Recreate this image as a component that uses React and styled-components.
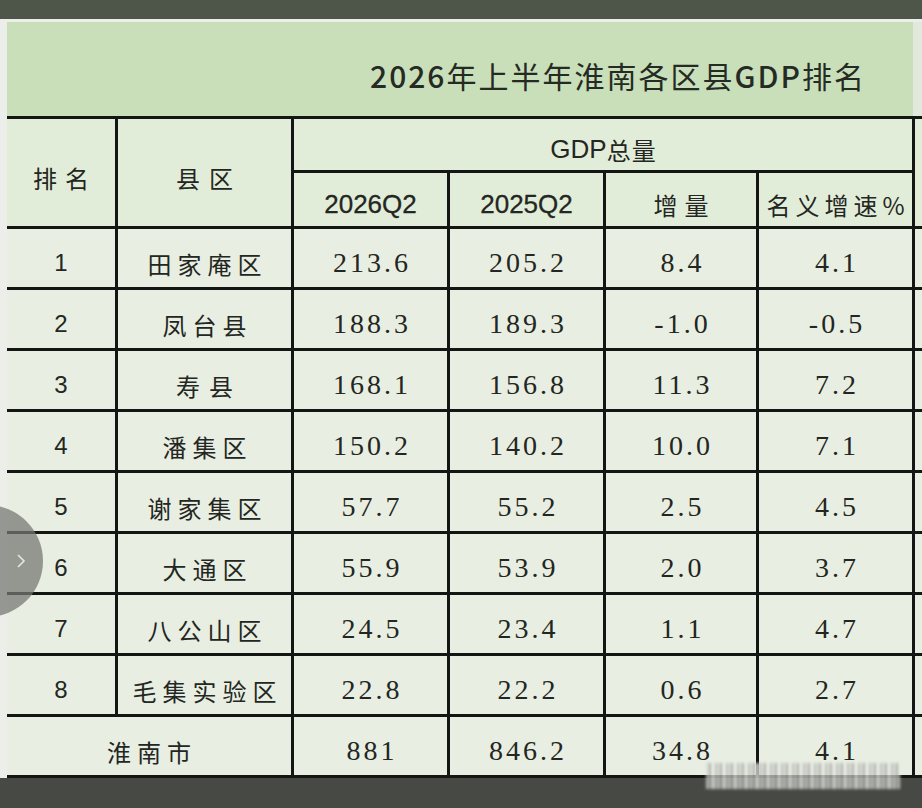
import React from "react";
import styled, { createGlobalStyle } from "styled-components";

const GlobalStyle = createGlobalStyle`
  html, body {
    margin: 0;
    padding: 0;
    background: #474944;
  }
  * {
    box-sizing: border-box;
  }
`;

const cjk = `"Noto Sans CJK SC", "Noto Sans", sans-serif`;

const rows = [
  [1, "田家庵区", "213.6", "205.2", "8.4", "4.1"],
  [2, "凤台县", "188.3", "189.3", "-1.0", "-0.5"],
  [3, "寿县", "168.1", "156.8", "11.3", "7.2"],
  [4, "潘集区", "150.2", "140.2", "10.0", "7.1"],
  [5, "谢家集区", "57.7", "55.2", "2.5", "4.5"],
  [6, "大通区", "55.9", "53.9", "2.0", "3.7"],
  [7, "八公山区", "24.5", "23.4", "1.1", "4.7"],
  [8, "毛集实验区", "22.8", "22.2", "0.6", "2.7"],
];

const total = ["淮南市", "881", "846.2", "34.8", "4.1"];

const Page = styled.div`
  position: relative;
  width: 922px;
  height: 808px;
  display: flex;
  flex-direction: column;
  overflow: hidden;
  background: #474944;
`;

const TopBar = styled.div`
  height: 19px;
  flex-shrink: 0;
  background: #4e5649;
`;

const Screen = styled.div`
  display: flex;
  flex-direction: column;
  padding: 3px 0 0 7px;
  background: #eceee9;
  overflow: hidden;
  flex-shrink: 0;
`;

const Banner = styled.div`
  display: flex;
  height: 94px;
`;

const Title = styled.div`
  width: 906px;
  flex-shrink: 0;
  display: flex;
  align-items: center;
  justify-content: center;
  padding: 12px 0 0 316px;
  background: #c8dfb9;
  color: #262a24;
  font-family: ${cjk};
  font-size: 30px;
  font-weight: 400;
  letter-spacing: 2px;
`;

const TitleLatin = styled.span`
  font-weight: 500;
`;

const BannerRest = styled.div`
  flex: 1;
  background: #e2e9dc;
`;

const Grid = styled.div`
  display: grid;
  width: max-content;
  grid-template-columns: 108px 173px 153px 153px 150px 153px 100px;
  grid-template-rows: 51px 53px repeat(9, 58px);
  gap: 3px;
  padding: 3px 0;
  background: #141614;
`;

const Cell = styled.div`
  grid-column: span ${(p) => p.$cols || 1};
  grid-row: span ${(p) => p.$rows || 1};
  display: flex;
  align-items: center;
  justify-content: center;
  padding-top: 10px;
  padding-left: ${(p) => p.$ls || 0}px;
  background: ${(p) => (p.$head ? "#e2edd9" : "#e8eee1")};
  color: #232622;
  white-space: nowrap;
  font-family: ${cjk};
  font-size: 24px;
  letter-spacing: ${(p) => p.$ls || 0}px;
`;

const Latin = styled.span`
  font-family: "Liberation Sans", Arial, sans-serif;
  font-size: 26px;
  letter-spacing: 0;
`;

const Quarter = styled(Cell)`
  font-family: "Liberation Sans", Arial, sans-serif;
  font-size: 26px;
  -webkit-text-stroke: 0.3px #232622;
`;

const Rank = styled(Cell)`
  font-family: "Liberation Sans", Arial, sans-serif;
  font-size: 24px;
`;

const Num = styled(Cell)`
  font-family: "Liberation Serif", "Times New Roman", serif;
  font-size: 28px;
`;

const Pager = styled.div`
  position: absolute;
  left: -69px;
  top: 505px;
  width: 112px;
  height: 112px;
  border-radius: 50%;
  background: rgba(118, 120, 116, 0.74);
  display: flex;
  align-items: center;
  justify-content: flex-end;
  padding-right: 16px;
`;

const Blur = styled.div`
  position: absolute;
  left: 706px;
  top: 763px;
  width: 194px;
  height: 26px;
  filter: blur(1.5px);
  opacity: 0.75;
  background: repeating-linear-gradient(
    90deg,
    #d9dcd6 0 3px,
    #8e918b 3px 5px,
    #f0f1ee 5px 9px,
    #a5a8a2 9px 11px
  );
`;

const BottomBar = styled.div`
  flex: 1;
  background: #474944;
`;

export default function App() {
  return (
    <>
      <GlobalStyle />
      <Page>
        <TopBar />
        <Screen>
          <Banner>
            <Title>
              <TitleLatin>2026</TitleLatin>年上半年淮南各区县<TitleLatin>GDP</TitleLatin>排名
            </Title>
            <BannerRest />
          </Banner>
          <Grid>
            <Cell $head $rows={2} $ls={8}>排名</Cell>
            <Cell $head $rows={2} $ls={9}>县区</Cell>
            <Cell $head $cols={4} $ls={1}>
              <Latin>GDP</Latin>总量
            </Cell>
            <Cell $head $rows={2} />
            <Quarter $head>2026Q2</Quarter>
            <Quarter $head>2025Q2</Quarter>
            <Cell $head $ls={7}>增量</Cell>
            <Cell $head $ls={5}>名义增速%</Cell>

            {rows.map(([rank, name, a, b, c, d]) => (
              <React.Fragment key={rank}>
                <Rank>{rank}</Rank>
                <Cell $ls={name.length === 2 ? 9 : 6}>{name}</Cell>
                <Num $ls={3}>{a}</Num>
                <Num $ls={3}>{b}</Num>
                <Num $ls={3}>{c}</Num>
                <Num $ls={3}>{d}</Num>
                <Cell />
              </React.Fragment>
            ))}

            <Cell $cols={2} $ls={6}>{total[0]}</Cell>
            {total.slice(1).map((v, i) => (
              <Num key={i} $ls={3}>{v}</Num>
            ))}
            <Cell />
          </Grid>
        </Screen>
        <BottomBar />
        <Pager>
          <svg width="12" height="16" viewBox="0 0 12 16">
            <polyline points="3,2 9,8 3,14" fill="none" stroke="#e4e6e2" strokeWidth="1.6" />
          </svg>
        </Pager>
        <Blur />
      </Page>
    </>
  );
}
